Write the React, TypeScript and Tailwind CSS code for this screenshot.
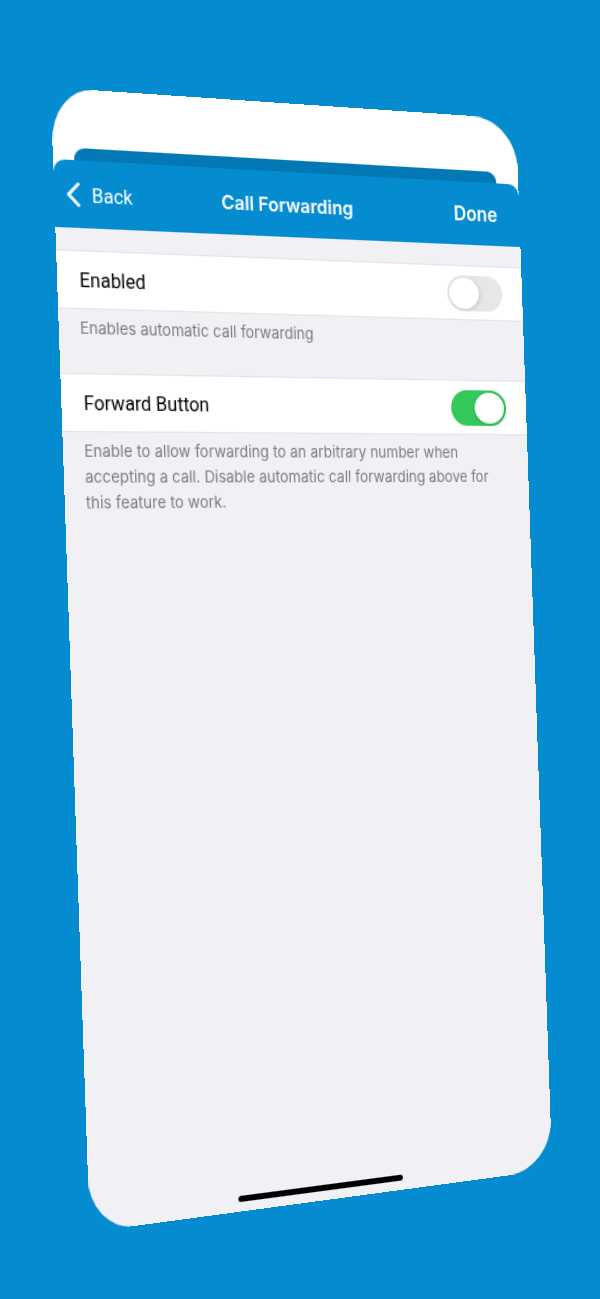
import React, { useState } from 'react';

interface SettingProps {
  id: string;
  label: string;
  hint: string;
  checked: boolean;
  onChange: (checked: boolean) => void;
}

function Setting({ id, label, hint, checked, onChange }: SettingProps) {
  return (
    <section>
      <div className="flex h-12 items-center justify-between border-y border-[#e4e4e7] bg-white pl-[19px] pr-5">
        <label htmlFor={id} className="pt-0.5 font-['Roboto',sans-serif] text-[16px] leading-5 text-black">{label}</label>
        <span className="relative h-[31px] w-[54px]">
          <input
            id={id}
            type="checkbox"
            role="switch"
            aria-describedby={`${id}-hint`}
            checked={checked}
            onChange={(e) => onChange(e.target.checked)}
            className="peer block h-full w-full cursor-pointer appearance-none rounded-full bg-[#e7e7e8] checked:bg-[#34c759]"
          />
          <span className="pointer-events-none absolute left-[2px] top-[2px] h-[27px] w-[29px] rounded-[50%] bg-white shadow-[1px_1px_4px_rgba(0,0,0,0.15)] peer-checked:left-[23px]" />
        </span>
      </div>
      <p id={`${id}-hint`} className="pl-[18px] pr-[30px] pt-[5px] text-[13px] leading-[21px] text-[#7b7b80]">
        {hint}
      </p>
    </section>
  );
}

export default function App() {
  const [enabled, setEnabled] = useState(false);
  const [forwardButton, setForwardButton] = useState(true);

  return (
    <main className="flex min-h-screen flex-col items-center overflow-hidden bg-[#048bd0] pt-[88px] font-['Inter',sans-serif]">
      {/* Phone screen, tilted in perspective */}
      <div className="flex h-[926px] w-[428px] shrink-0 origin-top-left flex-col overflow-hidden rounded-[36px_44px_44px_38px/44px] bg-white [transform:matrix3d(1.17758,0.080295,0,0.0002092,0.042438,1.23551,0,-0.000000584,0,0,1,0,-35.5,-0.7,0,1)]">
        {/* Edge of the sheet behind */}
        <div className="ml-[18px] mr-[22px] mt-12 h-[10px] shrink-0 rounded-t-[9px] bg-[#0278b5]" />

        <div className="flex flex-1 flex-col overflow-hidden rounded-t-[10px] bg-[#f1f0f5]">
          <header className="flex h-[55px] shrink-0 items-center bg-[#048bd0] pl-[10px] pr-[22px] leading-5 text-white">
            <div className="flex flex-1">
              <button type="button" className="flex cursor-pointer items-center gap-[10px] font-['Roboto',sans-serif] text-[16px]">
                <svg viewBox="0 0 12 20" className="h-5 w-3" fill="none" stroke="currentColor" strokeWidth="2.6" strokeLinecap="round" strokeLinejoin="round" aria-hidden="true">
                  <path d="M10.6 1.4 2.2 10l8.4 8.6" />
                </svg>
                <span className="pt-0.5">Back</span>
              </button>
            </div>
            <h1 className="mr-1 text-[16px] font-semibold">Call Forwarding</h1>
            <div className="flex flex-1 justify-end">
              <button type="button" className="cursor-pointer text-[17px] font-semibold">Done</button>
            </div>
          </header>

          <div className="flex flex-col gap-[26px] pt-[18px]">
            <Setting
              id="enabled"
              label="Enabled"
              hint="Enables automatic call forwarding"
              checked={enabled}
              onChange={setEnabled}
            />
            <Setting
              id="forward-button"
              label="Forward Button"
              hint="Enable to allow forwarding to an arbitrary number when accepting a call. Disable automatic call forwarding above for this feature to work."
              checked={forwardButton}
              onChange={setForwardButton}
            />
          </div>

          {/* Home indicator */}
          <div className="mb-2 mr-4 mt-auto h-[5px] w-[152px] self-center rounded-full bg-black" />
        </div>
      </div>
    </main>
  );
}
